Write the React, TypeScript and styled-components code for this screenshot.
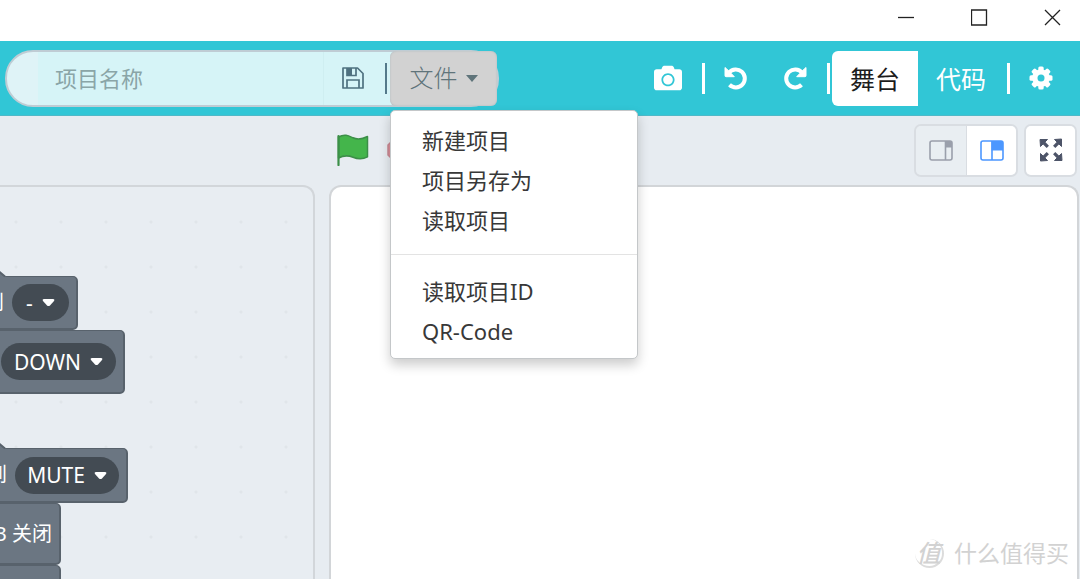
import React from "react";
import styled, { createGlobalStyle, css } from "styled-components";
import { FaCamera } from "react-icons/fa";

const GlobalStyle = createGlobalStyle`
  *, *::before, *::after { box-sizing: border-box; }
  body {
    margin: 0;
    background: #fff;
    font-family: "Noto Sans", "Noto Sans CJK SC", sans-serif;
    color: #222;
  }
  button, input { font: inherit; color: inherit; }
  button { border: 0; background: none; padding: 0; margin: 0; cursor: pointer; }
  svg { display: block; }
`;

const Page = styled.div`
  min-height: 100vh;
  display: flex;
  flex-direction: column;
  overflow: hidden;
`;

const TitleBar = styled.header`
  height: 41px;
  display: flex;
  justify-content: flex-end;
  align-items: center;
  gap: 56px;
  padding: 0 19px 7px 0;
`;

const WindowButton = styled.button`
  width: 17px;
  height: 17px;
`;

const Toolbar = styled.nav`
  height: 75px;
  display: flex;
  align-items: center;
  padding: 0 27px 0 5px;
  background: #31c6d6;
  border-bottom: 1px solid #4fb9c8;
`;

const ProjectBar = styled.div`
  flex: 0 0 493px;
  height: 57px;
  display: flex;
  align-items: center;
  border: 2px solid #bfccd4;
  border-radius: 28px;
  background: #d6f4f7;
  padding-left: 31px;
  box-shadow: inset 31px 0 0 #dff3f7;
`;

const ProjectName = styled.input`
  width: 286px;
  height: 53px;
  border: 0;
  border-right: 1px solid #cfeef1;
  outline: 0;
  padding: 0 17px;
  background: #d6f4f7;
  font-size: 22px;
  &::placeholder { color: #8aa5a7; opacity: 1; }
`;

const SaveButton = styled.button`
  margin: 0 21px 0 18px;
  color: #4f7180;
`;

const Separator = styled.span<{ $dark?: boolean }>`
  width: ${(p) => (p.$dark ? 2 : 3)}px;
  height: 31px;
  background: ${(p) => (p.$dark ? "#54798a" : "#fff")};
`;

const MenuAnchor = styled.div`
  position: relative;
  margin-left: 3px;
`;

const FileButton = styled.button`
  width: 107px;
  height: 55px;
  display: flex;
  align-items: center;
  justify-content: center;
  gap: 8px;
  border-radius: 6px;
  background: #d2d2d2;
  color: #5f747a;
  font-size: 24px;
  line-height: 34px;
  font-weight: 300;
  box-shadow: inset 0 0 2px #a9b5ba;
`;

const Menu = styled.div`
  position: absolute;
  z-index: 2;
  top: 59px;
  left: 0;
  width: 248px;
  padding: 9px 0 7px;
  border: 1px solid #c4c7c9;
  border-radius: 5px;
  background: #fff;
  box-shadow: 0 6px 12px rgba(0, 0, 0, 0.2);
`;

const MenuItem = styled.button`
  display: block;
  width: 100%;
  height: 40px;
  padding-left: 31px;
  text-align: left;
  font-size: 22px;
  line-height: 40px;
  white-space: nowrap;
  color: #383838;
`;

const MenuRule = styled.hr`
  margin: 14px 0 16px;
  border: 0;
  border-top: 1px solid #e3e3e3;
`;

const Tools = styled.div`
  margin-left: auto;
  display: flex;
  align-items: center;
`;

const IconButton = styled.button`
  color: #fff;
`;

const History = styled.div`
  display: flex;
  gap: 35px;
  padding: 0 20px 0 19px;
`;

const CaptureButton = styled(IconButton)`
  margin-right: 20px;
`;

const ModeButton = styled.button<{ $active?: boolean }>`
  height: 55px;
  padding: 0 18px;
  font-size: 25px;
  color: #fff;
  ${(p) =>
    p.$active &&
    css`
      margin-left: 2px;
      border-radius: 6px 0 0 6px;
      background: #fff;
      color: #1c1c1c;
    `}
`;

const ModeDivider = styled(Separator)`
  margin: 0 19px 0 3px;
`;

const Body = styled.main`
  flex: 1;
  display: flex;
  gap: 14px;
  padding-right: 1px;
  background: #e7ecf1;
`;

const CodeColumn = styled.section`
  flex: 0 0 315px;
  display: flex;
  padding-top: 69px;
`;

const Workspace = styled.div`
  position: relative;
  flex: 1;
  overflow: hidden;
  border: 2px solid #d2d6da;
  border-width: 2px 2px 0 0;
  border-radius: 0 12px 0 0;
  background: #e8edf2 radial-gradient(circle at 16px 35px, #e0e5ea 1px, transparent 2px) 0 0 / 45px 45px;
`;

const StageColumn = styled.section`
  flex: 1;
  display: flex;
  flex-direction: column;
`;

const StageControls = styled.div`
  height: 69px;
  display: flex;
  align-items: center;
  padding: 0 2px 1px 8px;
`;

const StopButton = styled.button`
  margin-left: 18px;
`;

const ViewControls = styled.div`
  margin-left: auto;
  display: flex;
  gap: 6px;
`;

const ViewGroup = styled.div`
  display: flex;
  border: 2px solid #d9dde2;
  border-radius: 7px;
  overflow: hidden;
`;

const ViewButton = styled.button<{ $on?: boolean }>`
  width: 50px;
  height: 49px;
  display: flex;
  align-items: center;
  justify-content: center;
  color: ${(p) => (p.$on ? "#4c97ff" : "#9a9fab")};
  background: ${(p) => (p.$on ? "#fff" : "#e9eef2")};
  & + & { border-left: 1px solid #d9dde2; }
`;

const FullButton = styled(ViewButton)`
  width: 49px;
  background: #fff;
  color: #4d5468;
`;

const Stage = styled.div`
  position: relative;
  flex: 1;
  border: 2px solid #d2d5d8;
  border-bottom: 0;
  border-radius: 12px 12px 0 0;
  background: #fff;
`;

const Script = styled.div<{ $x: number; $y: number }>`
  position: absolute;
  left: ${(p) => p.$x}px;
  top: ${(p) => p.$y}px;
`;

const HatCap = styled.svg`
  position: absolute;
  left: 0;
  top: -19px;
`;

const Block = styled.div<{ $width: number; $height: number }>`
  width: ${(p) => p.$width}px;
  height: ${(p) => p.$height}px;
  display: flex;
  align-items: center;
  justify-content: flex-end;
  gap: 8px;
  padding-right: 7px;
  border: 2px solid #58626c;
  border-top-width: 1px;
  border-radius: 5px;
  background: #6b7682;
  color: #fff;
  font-size: 20px;
  line-height: 28px;
  white-space: nowrap;
`;

const Choice = styled.button<{ $width: number }>`
  width: ${(p) => p.$width}px;
  height: 37px;
  display: flex;
  align-items: center;
  justify-content: center;
  gap: 9px;
  border-radius: 19px;
  background: #434b53;
  color: #fff;
  font-size: 21px;
  line-height: 28px;
`;

const Watermark = styled.div`
  position: absolute;
  right: 8px;
  bottom: 9px;
  display: flex;
  align-items: center;
  gap: 10px;
  color: #d2d2d2;
  font-size: 23px;
  line-height: 34px;
`;

const Seal = styled.span`
  width: 29px;
  height: 29px;
  border-radius: 50%;
  border-right: 2px solid #dcdcdc;
  border-bottom: 2px solid #dcdcdc;
  font-size: 24px;
  line-height: 27px;
  font-style: italic;
  font-weight: 500;
  text-align: center;
`;

const Caret = ({ light }: { light?: boolean }) =>
  light ? (
    <svg width="13" height="9" viewBox="0 0 13 9" aria-hidden="true">
      <path d="M2 1h9q2 0 1 2L8 7.500q-1.500 1.200-3 0L1 3Q0 1 2 1z" fill="#fff" />
    </svg>
  ) : (
    <svg width="12" height="7" viewBox="0 0 12 7" aria-hidden="true">
      <path d="M0 0h12L6 7z" fill="currentColor" />
    </svg>
  );

const SaveIcon = () => (
  <svg width="22" height="22" viewBox="0 0 22 22" fill="none" stroke="currentColor" strokeWidth="1.700">
    <path d="M1 1h14.500L21 6.500V21H1z" strokeLinejoin="round" />
    <path d="M5 21v-8h12v8M5 1v7.500h9V1" />
    <path d="M5 1h5v7H5z" fill="currentColor" stroke="none" />
  </svg>
);

const TurnIcon = ({ redo }: { redo?: boolean }) => (
  <svg width="24" height="24" viewBox="0 0 24 24" aria-hidden="true">
    <g transform={redo ? "matrix(-1 0 0 1 24 0)" : undefined}>
      <path
        d="M5 6.500A9 9 0 1 1 5.500 18.800"
        fill="none"
        stroke="#fff"
        strokeWidth="4"
      />
      <path d="M1 1.500v8.200q0 1 1 1h8.300L7.500 7.800 4 4.200z" fill="#fff" stroke="#fff" strokeLinejoin="round" />
    </g>
  </svg>
);

const GearIcon = () => (
  <svg width="24" height="24" viewBox="0 0 24 24" aria-hidden="true">
    {[0, 45, 90, 135].map((turn) => (
      <rect
        key={turn}
        x="9.300"
        y="0.500"
        width="5.400"
        height="23"
        rx="1.500"
        fill="#fff"
        transform={`rotate(${turn} 12 12)`}
      />
    ))}
    <circle cx="12" cy="12" r="8.800" fill="#fff" />
    <circle cx="12" cy="12" r="3.500" fill="#31c6d6" />
  </svg>
);

const FlagIcon = () => (
  <svg width="32" height="32" viewBox="0 0 32 32">
    <path
      d="M1.500 3C8-.5 12 2 16 3.800s9 1.500 14.500-1.300v20.300c-6 3.200-10 2.200-14.500.4S7 21 1.500 24z"
      fill="#44b54b"
      stroke="#3c8f48"
      strokeWidth="1.500"
      strokeLinejoin="round"
    />
    <path d="M1.500 2v29" stroke="#3c8f48" strokeWidth="2.200" strokeLinecap="round" />
  </svg>
);

const StopIcon = () => (
  <svg width="28" height="28" viewBox="0 0 28 28">
    <path
      d="M9 1h10l8 8v10l-8 8H9l-8-8V9z"
      fill="#dd8f99"
      stroke="#c98a95"
      strokeWidth="1.500"
      strokeLinejoin="round"
    />
  </svg>
);

const SmallStageIcon = () => (
  <svg width="24" height="21" viewBox="0 0 24 21" fill="none" stroke="currentColor" strokeWidth="1.600">
    <rect x="1" y="1" width="22" height="19" rx="2" />
    <path d="M16.500 1v19" />
    <path d="M16 1h6q1 0 1 1v5.500h-7z" fill="currentColor" stroke="none" />
  </svg>
);

const LargeStageIcon = () => (
  <svg width="24" height="21" viewBox="0 0 24 21" fill="none" stroke="currentColor" strokeWidth="1.600">
    <rect x="1" y="1" width="22" height="19" rx="2" />
    <path d="M12 1v19" />
    <path d="M11.500 1H22q1 0 1 1v8.500H11.500z" fill="currentColor" stroke="none" />
  </svg>
);

const FullScreenIcon = () => (
  <svg width="24" height="24" viewBox="0 0 24 24" aria-hidden="true">
    {[0, 90, 180, 270].map((turn) => (
      <g key={turn} transform={`rotate(${turn} 12 12)`} stroke="currentColor">
        <path d="M1 1.500h7.500L1.500 8.500z" fill="currentColor" strokeLinejoin="round" />
        <path d="M3.500 3.500l5.300 5.300" strokeWidth="3.200" />
      </g>
    ))}
  </svg>
);

const Cap = () => (
  <HatCap width="76" height="21" viewBox="0 0 76 21">
    <path d="M0 20C16 2 44 2 56 12l9 7.500q1 .5 3 .5z" fill="#6b7682" />
    <path d="M0 20C16 2 44 2 56 12l9 7.500" fill="none" stroke="#58626c" strokeWidth="2" />
  </HatCap>
);

const Dropdown = ({ label, width }: { label: string; width: number }) => (
  <Choice $width={width}>
    <span>{label}</span>
    <Caret light />
  </Choice>
);

export default function App() {
  return (
    <Page>
      <GlobalStyle />
      <TitleBar>
        <WindowButton aria-label="Minimize">
          <svg width="17" height="17" viewBox="0 0 17 17" stroke="#222" strokeWidth="1.300">
            <path d="M0 8.500h16" />
          </svg>
        </WindowButton>
        <WindowButton aria-label="Maximize">
          <svg width="17" height="17" viewBox="0 0 17 17" stroke="#222" strokeWidth="1.300" fill="none">
            <path d="M.5 1h15v15h-15z" />
          </svg>
        </WindowButton>
        <WindowButton aria-label="Close">
          <svg width="17" height="17" viewBox="0 0 17 17" stroke="#222" strokeWidth="1.300">
            <path d="M1 1l15 15M16 1L1 16" />
          </svg>
        </WindowButton>
      </TitleBar>

      <Toolbar>
        <ProjectBar>
          <ProjectName aria-label="项目名称" placeholder="项目名称" />
          <SaveButton aria-label="Save">
            <SaveIcon />
          </SaveButton>
          <Separator $dark />
          <MenuAnchor>
            <FileButton aria-haspopup="menu" aria-expanded="true">
              文件
              <Caret />
            </FileButton>
            <Menu role="menu">
              <MenuItem role="menuitem">新建项目</MenuItem>
              <MenuItem role="menuitem">项目另存为</MenuItem>
              <MenuItem role="menuitem">读取项目</MenuItem>
              <MenuRule />
              <MenuItem role="menuitem">读取项目ID</MenuItem>
              <MenuItem role="menuitem">QR-Code</MenuItem>
            </Menu>
          </MenuAnchor>
        </ProjectBar>

        <Tools>
          <CaptureButton aria-label="Screenshot">
            <FaCamera size={28} />
          </CaptureButton>
          <Separator />
          <History>
            <IconButton aria-label="Undo">
              <TurnIcon />
            </IconButton>
            <IconButton aria-label="Redo">
              <TurnIcon redo />
            </IconButton>
          </History>
          <Separator />
          <ModeButton $active>舞台</ModeButton>
          <ModeButton>代码</ModeButton>
          <ModeDivider />
          <IconButton aria-label="Settings">
            <GearIcon />
          </IconButton>
        </Tools>
      </Toolbar>

      <Body>
        <CodeColumn>
          <Workspace>
            <Script $x={-60} $y={89}>
              <Cap />
              <Block $width={138} $height={54}>
                <span>到</span>
                <Dropdown label="-" width={57} />
              </Block>
              <Block $width={185} $height={64}>
                <Dropdown label="DOWN" width={115} />
              </Block>
            </Script>
            <Script $x={-60} $y={261}>
              <Cap />
              <Block $width={188} $height={55}>
                <span>到</span>
                <Dropdown label="MUTE" width={104} />
              </Block>
              <Block $width={121} $height={62}>
                <span>B 关闭</span>
              </Block>
              <Block $width={121} $height={62} />
            </Script>
          </Workspace>
        </CodeColumn>

        <StageColumn>
          <StageControls>
            <button aria-label="Go">
              <FlagIcon />
            </button>
            <StopButton aria-label="Stop">
              <StopIcon />
            </StopButton>
            <ViewControls>
              <ViewGroup>
                <ViewButton aria-label="Small stage">
                  <SmallStageIcon />
                </ViewButton>
                <ViewButton $on aria-label="Large stage">
                  <LargeStageIcon />
                </ViewButton>
              </ViewGroup>
              <ViewGroup>
                <FullButton aria-label="Full screen">
                  <FullScreenIcon />
                </FullButton>
              </ViewGroup>
            </ViewControls>
          </StageControls>
          <Stage>
            <Watermark>
              <Seal>值</Seal>
              <span>什么值得买</span>
            </Watermark>
          </Stage>
        </StageColumn>
      </Body>
    </Page>
  );
}
